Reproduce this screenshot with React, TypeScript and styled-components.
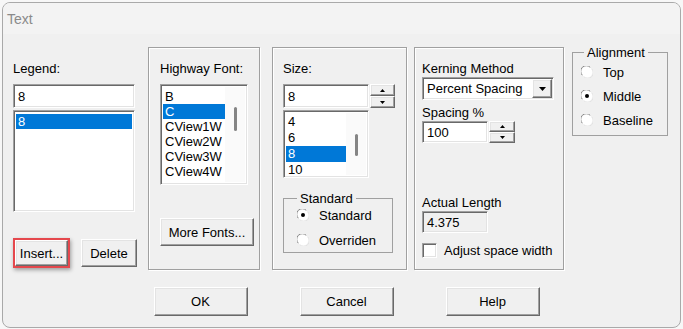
import React from "react";
import styled, { createGlobalStyle } from "styled-components";

const GlobalStyle = createGlobalStyle`
  html, body {
    margin: 0;
    padding: 0;
    background: #f7f7f7;
  }
  body {
    font-family: "Liberation Sans", Arial, sans-serif;
    font-size: 13px;
    color: #000;
  }
`;

const Window = styled.div`
  box-sizing: border-box;
  width: 679px;
  height: 326px;
  margin: 2px 0 0 2px;
  border: 1px solid #a9a9a9;
  border-radius: 8px;
  overflow: hidden;
  background: #f0f0f0;
  display: flex;
  flex-direction: column;
`;

const TitleBar = styled.div`
  flex: none;
  height: 31px;
  display: flex;
  align-items: center;
  padding-left: 4px;
  font-size: 14px;
  color: #8a8a8a;
  background: #f3f3f3;
`;

const Body = styled.div`
  flex: 1;
  display: flex;
  flex-direction: column;
  padding: 13px 0 0 10px;
`;

const TopRow = styled.div`
  display: flex;
  align-items: flex-start;
  height: 223px;
`;

const Column = styled.div`
  box-sizing: border-box;
  width: 124px;
  height: 223px;
  padding-top: 14px;
  display: flex;
  flex-direction: column;
  align-items: flex-start;
`;

const Group = styled.div<{ $w: number; $ml: number; $pl: number }>`
  box-sizing: border-box;
  width: ${(p) => p.$w}px;
  height: 223px;
  margin-left: ${(p) => p.$ml}px;
  padding: 13px 0 0 ${(p) => p.$pl}px;
  border: 1px solid #a0a0a0;
  box-shadow: inset 1px 1px 0 #fff, 1px 1px 0 #fff;
  display: flex;
  flex-direction: column;
  align-items: flex-start;
`;

const Label = styled.div<{ $mt?: number }>`
  line-height: 15px;
  margin-top: ${(p) => p.$mt ?? 0}px;
  white-space: nowrap;
`;

const Sunken = styled.div<{ $w: number; $h: number; $mt?: number; $ro?: boolean }>`
  box-sizing: border-box;
  width: ${(p) => p.$w}px;
  height: ${(p) => p.$h}px;
  margin-top: ${(p) => p.$mt ?? 0}px;
  flex: none;
  background: ${(p) => (p.$ro ? "#f0f0f0" : "#fff")};
  border: 1px solid;
  border-color: #a0a0a0 #fff #fff #a0a0a0;
  box-shadow: inset 1px 1px 0 #696969, inset -1px -1px 0 #e3e3e3;
`;

const TextField = styled(Sunken)`
  display: flex;
  align-items: center;
  padding-left: 4px;
  line-height: 15px;
`;

const ListBox = styled(Sunken)`
  display: flex;
  padding: 2px;
  overflow: hidden;
`;

const Items = styled.div<{ $pt: number }>`
  flex: 1;
  display: flex;
  flex-direction: column;
  padding-top: ${(p) => p.$pt}px;
`;

const Item = styled.div<{ $sel?: boolean; $h: number }>`
  height: ${(p) => p.$h}px;
  line-height: ${(p) => p.$h}px;
  padding-left: 2px;
  white-space: nowrap;
  background: ${(p) => (p.$sel ? "#0078d7" : "transparent")};
  color: ${(p) => (p.$sel ? "#fff" : "#000")};
`;

const ScrollTrack = styled.div<{ $pt: number }>`
  width: 20px;
  flex: none;
  display: flex;
  justify-content: center;
  padding-top: ${(p) => p.$pt}px;
  background: #fafafa;
`;

const Thumb = styled.div<{ $h: number }>`
  width: 3px;
  height: ${(p) => p.$h}px;
  border-radius: 2px;
  background: #858585;
`;

const Button = styled.button<{ $w: number; $h: number; $mt?: number }>`
  box-sizing: border-box;
  width: ${(p) => p.$w}px;
  height: ${(p) => p.$h}px;
  margin-top: ${(p) => p.$mt ?? 0}px;
  padding: 0;
  font: inherit;
  color: #000;
  background: #f0f0f0;
  border: 1px solid;
  border-color: #fff #696969 #696969 #fff;
  box-shadow: inset -1px -1px 0 #a0a0a0, inset 1px 1px 0 #e3e3e3;
  flex: none;
`;

const ButtonRow = styled.div`
  display: flex;
  align-items: center;
  gap: 11px;
  margin-top: 26px;
`;

const Highlight = styled.span`
  display: inline-flex;
  border: 2px solid #e5484d;
  box-shadow: 1px 2px 4px rgba(0, 0, 0, 0.35);
`;

const InputRow = styled.div<{ $mt: number }>`
  display: flex;
  gap: 1px;
  margin-top: ${(p) => p.$mt}px;
`;

const Spin = styled.div<{ $w: number; $h: number }>`
  width: ${(p) => p.$w}px;
  height: ${(p) => p.$h}px;
  display: flex;
  flex-direction: column;
`;

const SpinBtn = styled.div`
  box-sizing: border-box;
  flex: 1;
  display: flex;
  align-items: center;
  justify-content: center;
  background: #f0f0f0;
  border: 1px solid;
  border-color: #fff #696969 #696969 #fff;
  box-shadow: inset -1px -1px 0 #a0a0a0, inset 1px 1px 0 #e3e3e3;
`;

const Dropdown = styled(Sunken)`
  display: flex;
  align-items: center;
  padding: 2px 1px 2px 4px;
`;

const DropText = styled.span`
  flex: 1;
  white-space: nowrap;
`;

const DropBtn = styled(SpinBtn)`
  flex: none;
  width: 20px;
  height: 19px;
`;

const Fieldset = styled.fieldset<{
  $w: number;
  $h: number;
  $pl: number;
  $mt: number;
  $ml?: number;
}>`
  box-sizing: border-box;
  width: ${(p) => p.$w}px;
  height: ${(p) => p.$h}px;
  margin: ${(p) => p.$mt}px 0 0 ${(p) => p.$ml ?? 0}px;
  padding: 0 0 0 ${(p) => p.$pl}px;
  border: 1px solid #a0a0a0;
  min-width: 0;
`;

const Legend = styled.legend<{ $ml: number }>`
  padding: 0 3px;
  margin-left: ${(p) => p.$ml}px;
  line-height: 15px;
`;

const RadioList = styled.div<{ $gap: number }>`
  display: flex;
  flex-direction: column;
  gap: ${(p) => p.$gap}px;
`;

const RadioRow = styled.div<{ $h: number }>`
  display: flex;
  align-items: center;
  gap: 10px;
  height: ${(p) => p.$h}px;
  white-space: nowrap;
`;

const CheckRow = styled.div`
  display: flex;
  align-items: center;
  gap: 7px;
  margin-top: 10px;
  white-space: nowrap;
`;

const FooterRow = styled.div`
  display: flex;
  justify-content: center;
  gap: 52px;
  margin-top: 17px;
`;

const Radio = ({ checked }: { checked?: boolean }) => (
  <svg width="12" height="12" viewBox="0 0 12 12" style={{ flex: "none" }}>
    <circle cx="6" cy="6" r="5.5" fill="#fff" />
    <path d="M1.3 9.2 A5.5 5.5 0 0 1 9.2 1.3" stroke="#8a8a8a" fill="none" />
    <path d="M10.7 2.8 A5.5 5.5 0 0 1 2.8 10.7" stroke="#e3e3e3" fill="none" />
    {checked && <circle cx="6" cy="6" r="2" fill="#000" />}
  </svg>
);

const Arrow = ({ up, w = 5, h = 3 }: { up?: boolean; w?: number; h?: number }) => (
  <svg width={w} height={h} viewBox={`0 0 ${w} ${h}`}>
    <polygon
      points={up ? `0,${h} ${w},${h} ${w / 2},0` : `0,0 ${w},0 ${w / 2},${h}`}
      fill="#000"
    />
  </svg>
);

const Spinner = ({ w, h }: { w: number; h: number }) => (
  <Spin $w={w} $h={h}>
    <SpinBtn>
      <Arrow up />
    </SpinBtn>
    <SpinBtn>
      <Arrow />
    </SpinBtn>
  </Spin>
);

const fonts = ["B", "C", "CView1W", "CView2W", "CView3W", "CView4W"];
const sizes = ["4", "6", "8", "10"];

export default function App() {
  return (
    <>
      <GlobalStyle />
      <Window>
        <TitleBar>Text</TitleBar>
        <Body>
          <TopRow>
            <Column>
              <Label>Legend:</Label>
              <TextField $w={122} $h={24} $mt={8}>
                8
              </TextField>
              <ListBox $w={122} $h={102} $mt={2}>
                <Items $pt={1}>
                  <Item $h={15} $sel>
                    8
                  </Item>
                </Items>
              </ListBox>
              <ButtonRow>
                <Highlight>
                  <Button $w={53} $h={26}>
                    Insert...
                  </Button>
                </Highlight>
                <Button $w={56} $h={28}>
                  Delete
                </Button>
              </ButtonRow>
            </Column>

            <Group $w={112} $ml={11} $pl={11}>
              <Label>Highway Font:</Label>
              <ListBox $w={88} $h={101} $mt={8}>
                <Items $pt={2}>
                  {fonts.map((f) => (
                    <Item key={f} $h={15} $sel={f === "C"}>
                      {f}
                    </Item>
                  ))}
                </Items>
                <ScrollTrack $pt={20}>
                  <Thumb $h={24} />
                </ScrollTrack>
              </ListBox>
              <Button $w={94} $h={28} $mt={33}>
                More Fonts...
              </Button>
            </Group>

            <Group $w={135} $ml={12} $pl={10}>
              <Label>Size:</Label>
              <InputRow $mt={8}>
                <TextField $w={86} $h={24}>
                  8
                </TextField>
                <Spinner w={25} h={24} />
              </InputRow>
              <ListBox $w={86} $h={68} $mt={2}>
                <Items $pt={1}>
                  {sizes.map((s) => (
                    <Item key={s} $h={16} $sel={s === "8"}>
                      {s}
                    </Item>
                  ))}
                </Items>
                <ScrollTrack $pt={21}>
                  <Thumb $h={22} />
                </ScrollTrack>
              </ListBox>
              <Fieldset $w={110} $h={62} $pl={13} $mt={13}>
                <Legend $ml={0}>Standard</Legend>
                <RadioList $gap={7}>
                  <RadioRow $h={18}>
                    <Radio checked />
                    Standard
                  </RadioRow>
                  <RadioRow $h={18}>
                    <Radio />
                    Overriden
                  </RadioRow>
                </RadioList>
              </Fieldset>
            </Group>

            <Group $w={150} $ml={7} $pl={7}>
              <Label>Kerning Method</Label>
              <Dropdown $w={132} $h={23} $mt={1}>
                <DropText>Percent Spacing</DropText>
                <DropBtn>
                  <Arrow w={7} h={4} />
                </DropBtn>
              </Dropdown>
              <Label $mt={5}>Spacing %</Label>
              <InputRow $mt={1}>
                <TextField $w={66} $h={22}>
                  100
                </TextField>
                <Spinner w={26} h={22} />
              </InputRow>
              <Label $mt={52}>Actual Length</Label>
              <TextField $w={66} $h={22} $mt={1} $ro>
                4.375
              </TextField>
              <CheckRow>
                <Sunken $w={15} $h={15} />
                Adjust space width
              </CheckRow>
            </Group>

            <Fieldset $w={96} $h={91} $pl={8} $mt={-2} $ml={8}>
              <Legend $ml={3}>Alignment</Legend>
              <RadioList $gap={0}>
                <RadioRow $h={24}>
                  <Radio />
                  Top
                </RadioRow>
                <RadioRow $h={24}>
                  <Radio checked />
                  Middle
                </RadioRow>
                <RadioRow $h={24}>
                  <Radio />
                  Baseline
                </RadioRow>
              </RadioList>
            </Fieldset>
          </TopRow>

          <FooterRow>
            <Button $w={94} $h={29}>
              OK
            </Button>
            <Button $w={94} $h={29}>
              Cancel
            </Button>
            <Button $w={94} $h={29}>
              Help
            </Button>
          </FooterRow>
        </Body>
      </Window>
    </>
  );
}
